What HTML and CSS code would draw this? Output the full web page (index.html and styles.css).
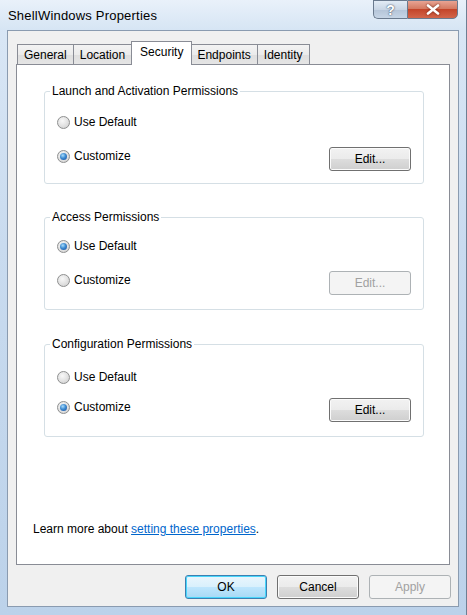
FILE: index.html
```html
<!DOCTYPE html>
<html>
<head>
<meta charset="utf-8">
<link rel="stylesheet" href="styles.css">
</head>
<body>
<div class="window">
  <div class="titlebar">
    <div class="title">ShellWindows Properties</div>
    <div class="caption-btns">
      <div class="cbtn help">?</div>
      <div class="cbtn close">
        <svg width="14" height="11" viewBox="0 0 14 11"><path d="M2 1.5 L12 9.5 M12 1.5 L2 9.5" stroke="#fff" stroke-width="2.6" stroke-linecap="round"/></svg>
      </div>
    </div>
  </div>
  <div class="client">
    <div class="tabs">
      <div class="tab first">General</div>
      <div class="tab">Location</div>
      <div class="tab active">Security</div>
      <div class="tab">Endpoints</div>
      <div class="tab">Identity</div>
    </div>
    <div class="panel">
      <fieldset class="group g1">
        <legend>Launch and Activation Permissions</legend>
        <div class="row"><span class="radio"></span>Use Default</div>
        <div class="row last"><span class="radio on"></span>Customize<span class="spacer"></span><button class="btn">Edit...</button></div>
      </fieldset>
      <fieldset class="group g2">
        <legend>Access Permissions</legend>
        <div class="row"><span class="radio on"></span>Use Default</div>
        <div class="row last"><span class="radio"></span>Customize<span class="spacer"></span><button class="btn disabled">Edit...</button></div>
      </fieldset>
      <fieldset class="group g3">
        <legend>Configuration Permissions</legend>
        <div class="row"><span class="radio"></span>Use Default</div>
        <div class="row last"><span class="radio on"></span>Customize<span class="spacer"></span><button class="btn">Edit...</button></div>
      </fieldset>
      <div class="learn">Learn more about <a href="#">setting these properties</a>.</div>
    </div>
    <div class="buttons">
      <button class="btn dlg default">OK</button>
      <button class="btn dlg">Cancel</button>
      <button class="btn dlg disabled">Apply</button>
    </div>
  </div>
</div>
</body>
</html>
```
FILE: styles.css
```css
html, body {
  margin: 0;
  padding: 0;
}
body {
  width: 467px;
  height: 615px;
  overflow: hidden;
  font-family: "Liberation Sans", Arial, sans-serif;
  font-size: 12px;
  color: #000;
  background: #fff;
}
.window {
  width: 467px;
  height: 615px;
  box-sizing: border-box;
  background: linear-gradient(180deg, #dbe8f6 0%, #c9dbef 40%, #bcd2ea 100%);
  border-right: 1px solid #6e7f93;
  display: flex;
  flex-direction: column;
}
.titlebar {
  height: 30px;
  display: flex;
  align-items: flex-start;
  justify-content: space-between;
  background: linear-gradient(180deg, #e9f1fa 0%, #d6e5f4 100%);
}
.title {
  padding-left: 8px;
  padding-top: 8px;
  font-size: 13px;
  color: #000;
  letter-spacing: 0.2px;
}
.caption-btns {
  display: flex;
  margin-right: 8px;
}
.cbtn {
  height: 19px;
  box-sizing: border-box;
  border: 1px solid #6a7a8e;
  display: flex;
  align-items: center;
  justify-content: center;
}
.help {
  width: 34px;
  border-right: none;
  border-radius: 0 0 0 5px;
  background: linear-gradient(180deg, #e2ebf5 0%, #c9d6e5 50%, #b4c4d8 51%, #c6d5e6 100%);
  color: #fff;
  font-weight: bold;
  font-size: 14px;
  text-shadow: 0 0 2px #4a5a70, 0 0 1px #4a5a70;
}
.close {
  width: 51px;
  border-radius: 0 0 5px 0;
  background: linear-gradient(180deg, #e8a493 0%, #d47a62 45%, #c4452a 50%, #d3654a 100%);
}
.close svg {
  filter: drop-shadow(0 0 1px #6b2010);
}
.client {
  flex: 1;
  margin: 0 7px 8px 7px;
  background: #f0f0f0;
  border: 1px solid #8a9bb0;
  display: flex;
  flex-direction: column;
  padding: 0 8px 0 8px;
}
.tabs {
  display: flex;
  align-items: flex-end;
  height: 33px;
  padding-left: 1px;
  position: relative;
  z-index: 2;
}
.tab {
  height: 20px;
  box-sizing: border-box;
  padding: 3px 6px 0 6px;
  border: 1px solid #898c95;
  border-bottom: none;
  margin-right: -1px;
  background: linear-gradient(180deg, #f3f3f3 0%, #ebebeb 50%, #dedede 51%, #e5e5e5 100%);
  white-space: nowrap;
}
.tab.active {
  height: 24px;
  margin-bottom: -1px;
  padding-top: 3px;
  margin-left: 0;
  margin-right: -2px;
  padding-left: 8px;
  padding-right: 8px;
  background: #fff;
  position: relative;
  z-index: 3;
}
.panel {
  height: 501px;
  box-sizing: border-box;
  background: #fff;
  border: 1px solid #898c95;
  padding: 18px 25px 0 27px;
  display: flex;
  flex-direction: column;
}
.group {
  margin: 0;
  border: 1px solid #d5dfe5;
  border-radius: 3px;
  padding: 0 12px 0 11px;
  min-width: 0;
  box-sizing: border-box;
  height: 101px;
  display: flex;
  flex-direction: column;
}
.g2 { margin-top: 25px; }
.g3 { margin-top: 26px; }
legend {
  padding: 0 2px;
  margin-left: -6px;
  color: #000;
  line-height: 16px;
}
.row {
  display: flex;
  align-items: center;
  height: 20px;
  margin-top: 13px;
  white-space: nowrap;
}
.row.last {
  margin-top: 12px;
  height: 24px;
}
.g3 .row { margin-top: 15px; }
.g3 .row.last { margin-top: 8px; }
.g2 .row { margin-top: 11px; }
.g2 .row.last { margin-top: 12px; }
.spacer { flex: 1; }
.radio {
  width: 13px;
  height: 13px;
  box-sizing: border-box;
  border-radius: 50%;
  border: 1px solid #8e8f8f;
  background: radial-gradient(circle at 40% 35%, #f8f8f8 0%, #e3e3e3 50%, #cbcbcb 100%);
  margin-left: 1px;
  margin-right: 4px;
  position: relative;
  flex: none;
}
.radio.on::after {
  content: "";
  position: absolute;
  left: 2px;
  top: 2px;
  width: 7px;
  height: 7px;
  border-radius: 50%;
  background: radial-gradient(circle at 40% 35%, #a9dcfb 0%, #3d8bd1 45%, #17489a 100%);
}
.btn {
  font-family: inherit;
  font-size: 12px;
  color: #000;
  width: 82px;
  height: 24px;
  border: 1px solid #707070;
  border-radius: 3px;
  background: linear-gradient(180deg, #f2f2f2 0%, #ebebeb 49%, #dddddd 50%, #cfcfcf 100%);
  box-shadow: inset 0 0 0 1px #fbfbfb;
  padding: 0;
  margin: 0;
  margin-top: 6px;
}
.btn.disabled {
  color: #a1a1a1;
  border-color: #adb2b5;
  background: #f4f4f4;
  box-shadow: none;
}
.learn {
  margin-top: auto;
  margin-left: -11px;
  margin-bottom: 28px;
}
.learn a {
  color: #0066cc;
  text-decoration: underline;
}
.buttons {
  display: flex;
  justify-content: flex-end;
  gap: 10px;
  padding-top: 10px;
  margin-right: -1px;
}
.btn.dlg {
  margin-top: 0;
  width: 82px;
  height: 24px;
}
.btn.default {
  border-color: #3c7fb1;
  background: linear-gradient(180deg, #eaf6fd 0%, #d9f0fc 49%, #bee6fd 50%, #a7d9f5 100%);
  box-shadow: inset 0 0 0 1px #48d6fb;
}
```
